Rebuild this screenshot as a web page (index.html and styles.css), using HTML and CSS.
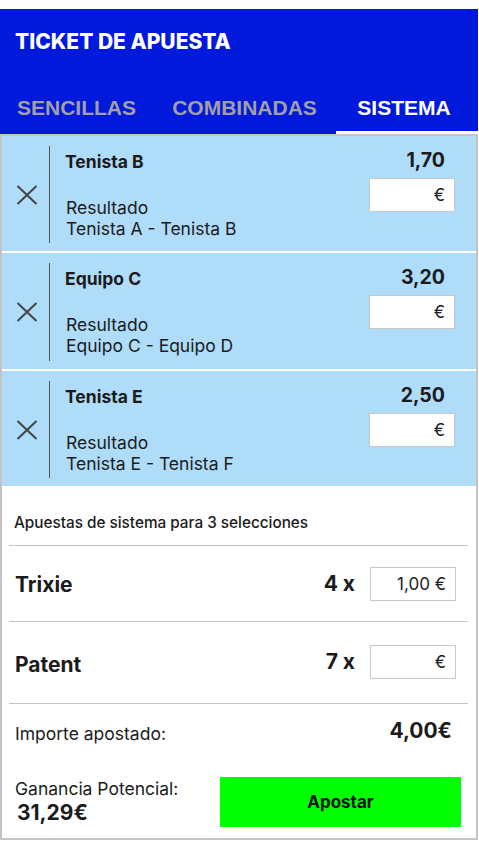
FILE: index.html
```html
<!DOCTYPE html>
<html lang="es">
<head>
<meta charset="utf-8">
<title>Ticket de apuesta</title>
<link rel="stylesheet" href="styles.css">
</head>
<body>
<div class="ticket">
  <header class="head">
    <div class="title">TICKET DE APUESTA</div>
    <nav class="tabs">
      <div class="tab">SENCILLAS</div>
      <div class="tab">COMBINADAS</div>
      <div class="tab active">SISTEMA</div>
    </nav>
  </header>
  <div class="box">
    <div class="sel s1">
      <div class="del"><svg width="22" height="20" viewBox="0 0 22 20"><path d="M1.5 1 L20.5 19 M20.5 1 L1.5 19" stroke="#444" stroke-width="2" fill="none"/></svg></div>
      <div class="info">
        <div class="name">Tenista B</div>
        <div class="market">Resultado</div>
        <div class="event">Tenista A - Tenista B</div>
      </div>
      <div class="right">
        <div class="odd">1,70</div>
        <div class="stake">€</div>
      </div>
    </div>
    <div class="sel s2">
      <div class="del"><svg width="22" height="20" viewBox="0 0 22 20"><path d="M1.5 1 L20.5 19 M20.5 1 L1.5 19" stroke="#444" stroke-width="2" fill="none"/></svg></div>
      <div class="info">
        <div class="name">Equipo C</div>
        <div class="market">Resultado</div>
        <div class="event">Equipo C - Equipo D</div>
      </div>
      <div class="right">
        <div class="odd">3,20</div>
        <div class="stake">€</div>
      </div>
    </div>
    <div class="sel s3">
      <div class="del"><svg width="22" height="20" viewBox="0 0 22 20"><path d="M1.5 1 L20.5 19 M20.5 1 L1.5 19" stroke="#444" stroke-width="2" fill="none"/></svg></div>
      <div class="info">
        <div class="name">Tenista E</div>
        <div class="market">Resultado</div>
        <div class="event">Tenista E - Tenista F</div>
      </div>
      <div class="right">
        <div class="odd">2,50</div>
        <div class="stake">€</div>
      </div>
    </div>
    <div class="system">
      <div class="sys-title">Apuestas de sistema para 3 selecciones</div>
      <div class="sys-row r1">
        <div class="sys-name">Trixie</div>
        <div class="sys-count">4 x</div>
        <div class="sys-stake">1,00 €</div>
      </div>
      <div class="sys-row r2">
        <div class="sys-name">Patent</div>
        <div class="sys-count">7 x</div>
        <div class="sys-stake">€</div>
      </div>
      <div class="total">
        <div class="total-label">Importe apostado:</div>
        <div class="total-value">4,00€</div>
      </div>
      <div class="footer">
        <div class="win">
          <div class="win-label">Ganancia Potencial:</div>
          <div class="win-value">31,29€</div>
        </div>
        <button class="bet">Apostar</button>
      </div>
    </div>
  </div>
</div>
</body>
</html>
```
FILE: styles.css
```css
html, body {
  margin: 0;
  padding: 0;
  background: #ffffff;
}
body {
  padding-top: 9px;
  font-family: Inter, "Noto Sans", sans-serif;
  color: #1b1b1b;
}
.ticket {
  width: 478px;
}
.head {
  background: #0019db;
  padding-top: 19px;
}
.title {
  color: #ffffff;
  font-family: Inter, sans-serif;
  font-weight: 800;
  font-size: 21px;
  line-height: 28px;
  padding-left: 15px;
}
.tabs {
  display: grid;
  grid-template-columns: 153px 183px 1fr;
  margin-top: 38px;
}
.tab {
  font-family: "Liberation Sans", Arial, sans-serif;
  font-weight: 700;
  font-size: 21px;
  line-height: 28px;
  color: #a39fa6;
  text-align: center;
  padding-bottom: 9px;
  border-bottom: 3px solid transparent;
}
.tab.active {
  color: #ffffff;
  border-bottom-color: #ffffff;
  padding-right: 6px;
}
.box {
  border: 2px solid #c4c4c4;
  background: #ffffff;
}
.sel {
  display: flex;
  height: 115px;
  box-sizing: border-box;
  padding: 10px 21px 8px 0;
  background: #aedcf9;
}
.sel.s2 {
  height: 116px;
}
.sel + .sel {
  margin-top: 2px;
}
.del {
  width: 47px;
  display: flex;
  align-items: center;
  justify-content: center;
  padding-left: 2px;
  box-sizing: border-box;
}
.info {
  flex: 1;
  border-left: 1px solid #555555;
  padding: 5px 0 0 15px;
}
.name {
  font-weight: 700;
  font-size: 17.5px;
  line-height: 22px;
}
.market {
  margin-top: 24px;
  font-size: 17.5px;
  line-height: 21px;
  padding-left: 1px;
}
.event {
  font-size: 17.5px;
  line-height: 21px;
  padding-left: 1px;
}
.right {
  width: 86px;
  padding-top: 2px;
}
.odd {
  font-weight: 700;
  font-size: 19.5px;
  line-height: 24px;
  text-align: right;
  padding-right: 10px;
}
.stake, .sys-stake {
  margin-top: 6px;
  height: 34px;
  box-sizing: border-box;
  background: #ffffff;
  border: 1px solid #c8c8c8;
  font-size: 17px;
  line-height: 32px;
  text-align: right;
  padding-right: 9px;
}
.system {
  padding: 0 8px 0 7px;
}
.sys-title {
  font-size: 15.3px;
  font-weight: 500;
  line-height: 20px;
  padding: 27px 0 12px 5px;
  border-bottom: 1px solid #c4c4c4;
}
.sys-row {
  display: flex;
  align-items: center;
  box-sizing: border-box;
  padding: 0 12px 0 6px;
  border-bottom: 1px solid #c4c4c4;
}
.sys-row.r1 { height: 76px; padding-top: 1px; }
.sys-row.r2 { height: 82px; padding-bottom: 2px; }
.sys-name {
  flex: 1;
  font-weight: 700;
  font-size: 21px;
  line-height: 24px;
  padding-top: 2px;
}
.sys-row.r2 .sys-name {
  padding-top: 6px;
}
.sys-count {
  font-weight: 700;
  font-size: 21px;
  line-height: 24px;
  margin-right: 15px;
}
.sys-stake {
  margin-top: 0;
  width: 86px;
}
.total {
  display: flex;
  justify-content: space-between;
  align-items: flex-end;
  padding: 15px 16px 0 6px;
}
.total-label {
  font-size: 17.5px;
  line-height: 22px;
}
.total-value {
  font-weight: 700;
  font-size: 21px;
  line-height: 24px;
  padding-bottom: 2px;
}
.footer {
  display: flex;
  justify-content: space-between;
  align-items: flex-end;
  padding: 32px 7px 11px 6px;
}
.win {
  padding-bottom: 1px;
}
.win-label {
  font-size: 17.5px;
  line-height: 22px;
}
.win-value {
  font-weight: 700;
  font-size: 21px;
  line-height: 26px;
  padding-left: 2px;
}
.bet {
  width: 241px;
  height: 50px;
  border: none;
  background: #00ff00;
  font-family: Inter, sans-serif;
  font-weight: 700;
  font-size: 17px;
  color: #111111;
  padding: 0;
  margin: 0;
}
```
